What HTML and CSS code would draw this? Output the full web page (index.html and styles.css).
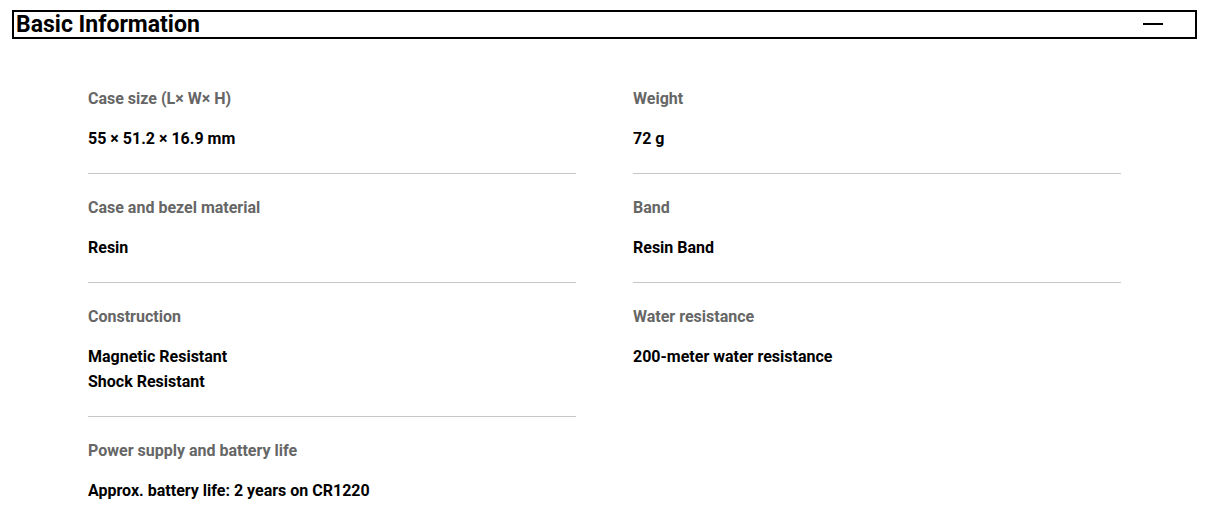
FILE: index.html
```html
<!DOCTYPE html>
<html lang="en">
<head>
<meta charset="utf-8">
<title>Basic Information</title>
<link rel="stylesheet" href="styles.css">
</head>
<body>
<section class="panel">
  <header class="panel-head">
    <h2 class="panel-title">Basic Information</h2>
    <span class="toggle" aria-label="Collapse"></span>
  </header>
  <div class="spec-grid">
    <div class="spec-col">
      <div class="spec">
        <div class="spec-label">Case size (L× W× H)</div>
        <div class="spec-value">55 × 51.2 × 16.9 mm</div>
      </div>
      <div class="spec">
        <div class="spec-label">Case and bezel material</div>
        <div class="spec-value">Resin</div>
      </div>
      <div class="spec">
        <div class="spec-label">Construction</div>
        <div class="spec-value">Magnetic Resistant<br>Shock Resistant</div>
      </div>
      <div class="spec">
        <div class="spec-label">Power supply and battery life</div>
        <div class="spec-value">Approx. battery life: 2 years on CR1220</div>
      </div>
    </div>
    <div class="spec-col">
      <div class="spec">
        <div class="spec-label">Weight</div>
        <div class="spec-value">72 g</div>
      </div>
      <div class="spec">
        <div class="spec-label">Band</div>
        <div class="spec-value">Resin Band</div>
      </div>
      <div class="spec">
        <div class="spec-label">Water resistance</div>
        <div class="spec-value">200-meter water resistance</div>
      </div>
    </div>
  </div>
</section>
</body>
</html>
```
FILE: styles.css
```css
html, body {
  margin: 0;
  padding: 0;
  background: #fff;
}
body {
  font-family: "Roboto", "DejaVu Sans Condensed", sans-serif;
  color: #000;
  padding: 10px 8px 0 12px;
}
.panel-head {
  display: flex;
  align-items: center;
  justify-content: space-between;
  border: 2px solid #000;
  height: 25px;
  padding: 0 32px 0 2px;
}
.panel-title {
  margin: 0;
  font-size: 23px;
  line-height: 25px;
  font-weight: 700;
}
.toggle {
  width: 20px;
  height: 2px;
  background: #000;
  margin-top: -2px;
}
.spec-grid {
  display: grid;
  grid-template-columns: 488px 488px;
  column-gap: 57px;
  padding: 26px 0 0 76px;
}
.spec {
  padding: 24px 0 22px;
  border-bottom: 1px solid #c6c6c6;
}
.spec-col .spec:last-child {
  border-bottom: none;
}
.spec-label {
  font-size: 16px;
  line-height: 20px;
  font-weight: 700;
  color: #666;
}
.spec-value {
  margin-top: 17px;
  font-size: 16px;
  line-height: 25px;
  font-weight: 700;
  color: #000;
}
```
